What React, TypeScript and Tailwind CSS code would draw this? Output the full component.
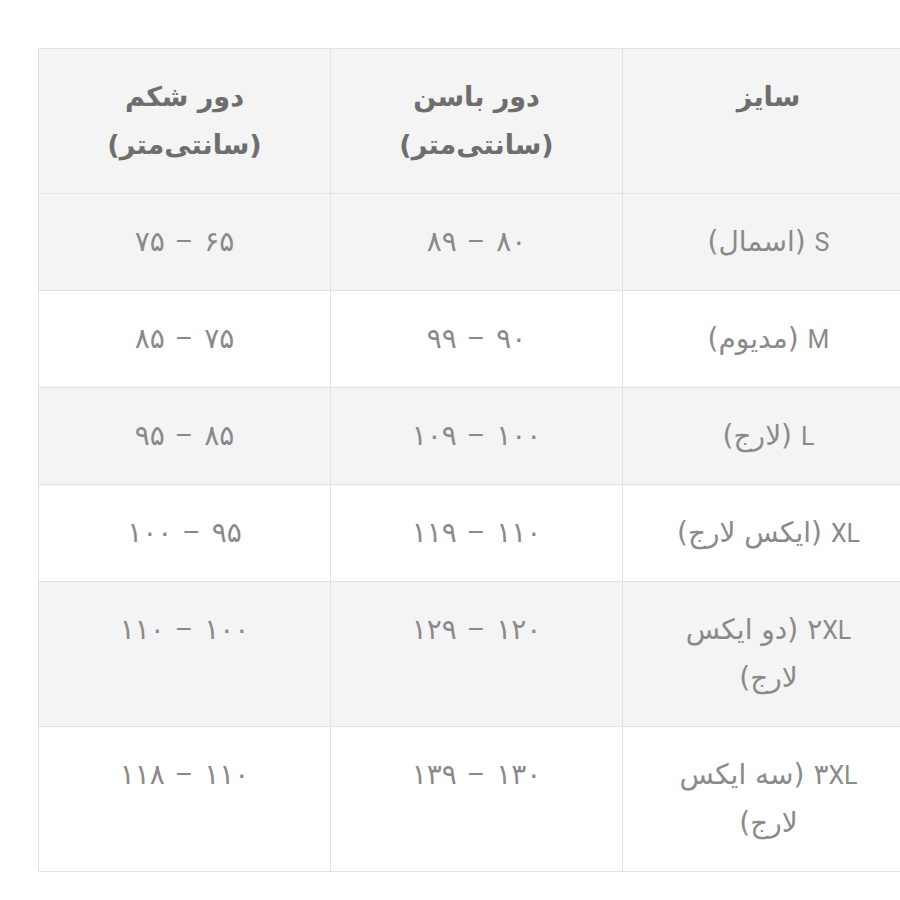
import React from "react";

const Lat = ({ children }: { children: React.ReactNode }) => (
  <span className="text-[25px] leading-none" style={{ fontFamily: '"Roboto", sans-serif' }}>
    {children}
  </span>
);

const Range = ({ a, b }: { a: string; b: string }) => (
  <>
    {a}
    <span
      className="inline-block px-[10px] text-[28px] leading-none"
      style={{ fontFamily: '"Roboto", sans-serif' }}
    >
      –
    </span>
    {b}
  </>
);

const rows: { size: React.ReactNode; hip: [string, string]; waist: [string, string] }[] = [
  { size: <><Lat>S</Lat> (اسمال)</>, hip: ["۸۰", "۸۹"], waist: ["۶۵", "۷۵"] },
  { size: <><Lat>M</Lat> (مدیوم)</>, hip: ["۹۰", "۹۹"], waist: ["۷۵", "۸۵"] },
  { size: <><Lat>L</Lat> (لارج)</>, hip: ["۱۰۰", "۱۰۹"], waist: ["۸۵", "۹۵"] },
  { size: <><Lat>XL</Lat> (ایکس لارج)</>, hip: ["۱۱۰", "۱۱۹"], waist: ["۹۵", "۱۰۰"] },
  {
    size: (
      <>
        ۲<Lat>XL</Lat> (دو ایکس
        <br />
        لارج)
      </>
    ),
    hip: ["۱۲۰", "۱۲۹"],
    waist: ["۱۰۰", "۱۱۰"],
  },
  {
    size: (
      <>
        ۳<Lat>XL</Lat> (سه ایکس
        <br />
        لارج)
      </>
    ),
    hip: ["۱۳۰", "۱۳۹"],
    waist: ["۱۱۰", "۱۱۸"],
  },
];

export default function App() {
  const font = { fontFamily: '"DejaVu Sans", sans-serif' };
  const th =
    "w-[292px] border border-[#e2e2e2] px-6 py-6 align-top text-center text-[27px] leading-[48px] font-bold text-[#6e6e6e]";
  const td = "border border-[#e2e2e2] px-6 py-6 align-top text-center text-[#8a8a8a]";
  return (
    <div className="w-[900px] h-[900px] overflow-hidden bg-white pt-[48px] pl-[38px]" style={font}>
      <table dir="rtl" className="w-[876px] table-fixed border-collapse border border-[#e2e2e2]">
        <thead>
          <tr className="bg-[#f4f4f4]">
            <th className={th}>سایز</th>
            <th className={th}>
              دور باسن
              <br />
              (سانتی‌متر)
            </th>
            <th className={th}>
              دور شکم
              <br />
              (سانتی‌متر)
            </th>
          </tr>
        </thead>
        <tbody>
          {rows.map((r, i) => (
            <tr key={i} className={i % 2 === 0 ? "bg-[#f4f4f4]" : "bg-white"}>
              <td className={td}>
                <div className="text-[28px] leading-[48px]">{r.size}</div>
              </td>
              <td className={td}>
                <div className="text-[28px] leading-[48px] tracking-[1px]">
                  <Range a={r.hip[0]} b={r.hip[1]} />
                </div>
              </td>
              <td className={td}>
                <div className="text-[28px] leading-[48px] tracking-[1px]">
                  <Range a={r.waist[0]} b={r.waist[1]} />
                </div>
              </td>
            </tr>
          ))}
        </tbody>
      </table>
    </div>
  );
}
